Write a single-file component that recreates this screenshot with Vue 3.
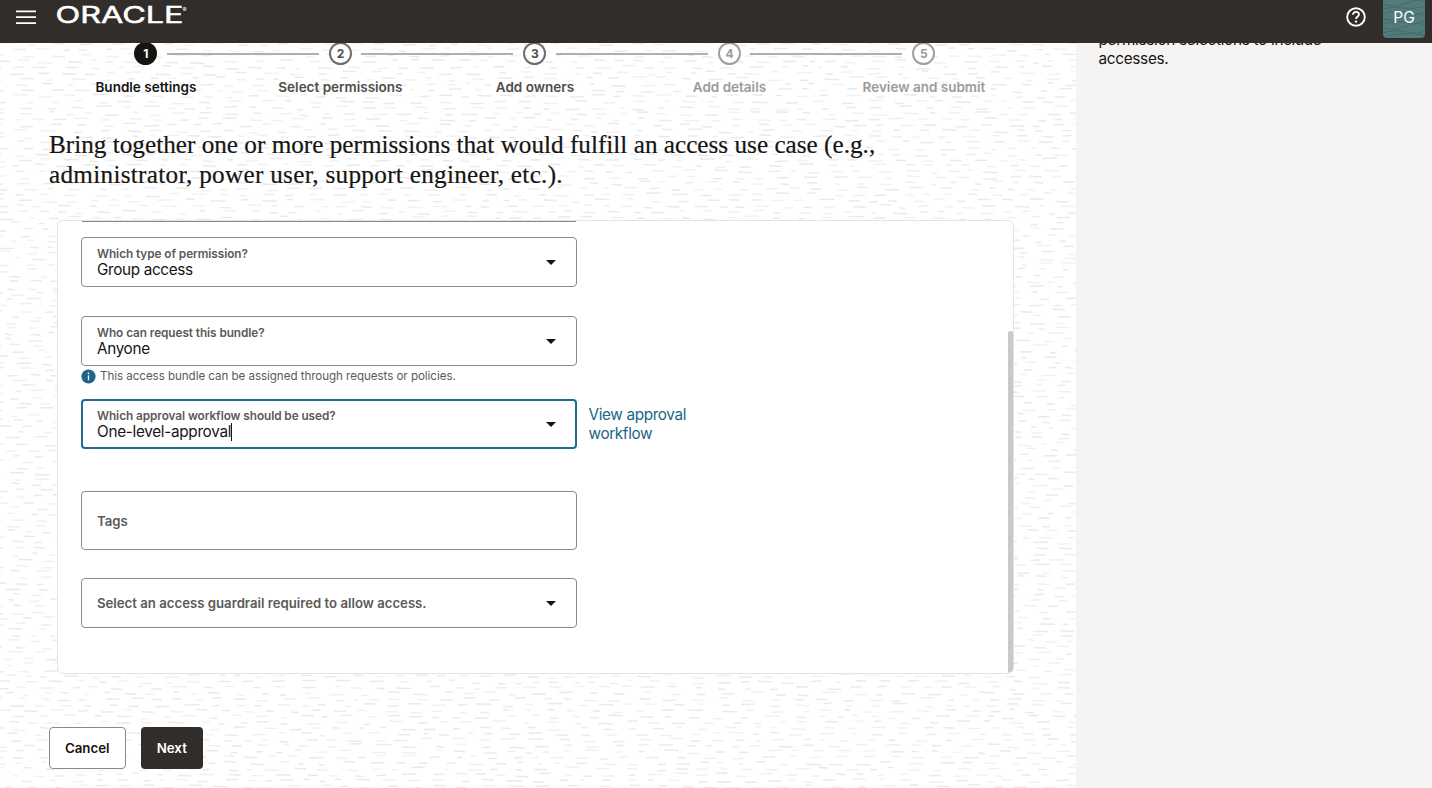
<script setup>
const steps = [
  { n: 1, label: 'Bundle settings', state: 'current' },
  { n: 2, label: 'Select permissions', state: 'open' },
  { n: 3, label: 'Add owners', state: 'open' },
  { n: 4, label: 'Add details', state: 'locked' },
  { n: 5, label: 'Review and submit', state: 'locked' },
]

// Deterministic woven texture made of short, slightly tilted dashes
function texture(width, height, rowGap, colGap, min, max, tilt) {
  let seed = 7
  const rnd = () => {
    seed = (seed * 16807) % 2147483647
    return seed / 2147483647
  }
  let light = ''
  let dark = ''
  for (let y = 1; y < height; y += rowGap) {
    let x = -rnd() * colGap
    while (x < width) {
      const len = min + rnd() * (max - min)
      const dy = (rnd() - 0.4) * tilt
      const d = `M${x.toFixed(1)} ${(y + (rnd() - 0.5) * rowGap * 0.6).toFixed(1)}l${len.toFixed(1)} ${dy.toFixed(1)}`
      if (rnd() > 0.5) light += d
      else dark += d
      x += len + colGap * (0.6 + rnd() * 0.8)
    }
  }
  return { light, dark }
}
const weave = texture(1076, 745, 5.8, 15, 4, 14, 1)
</script>

<template>
  <div class="page">
    <header class="topbar">
      <svg class="menu" width="20" height="16" viewBox="0 0 20 16">
        <path d="M0 2.4H20M0 8.2H20M0 14.2H20" stroke="#fff" stroke-width="1.8" />
      </svg>
      <svg class="logo" width="134" height="28" viewBox="0 0 134 28">
        <text class="word" x="-0.5" y="23" textLength="128" lengthAdjust="spacingAndGlyphs">ORACLE</text>
        <text class="reg" x="126.5" y="11.5">®</text>
      </svg>
      <svg class="help" width="20" height="20" viewBox="0 0 20 20" fill="none" stroke="#fff">
        <circle cx="10" cy="10" r="8.8" stroke-width="1.9" />
        <path d="M7 7.8C7 6 8.3 4.9 10 4.9S13 6 13 7.6C13 9.4 10 9.7 10 12.1" stroke-width="1.8" />
        <circle cx="10" cy="14.6" r="1.2" fill="#fff" stroke="none" />
      </svg>
      <div class="avatar">
        <svg class="grain" width="42" height="37" viewBox="0 0 42 37" fill="none" stroke="#456c6b" stroke-width="1">
          <path d="M0 4Q12 8 24 3T42 2M0 9Q10 6 20 8T42 6M0 14Q14 9 25 13T42 11M0 19Q10 22 22 17T42 16M0 24Q15 20 24 23T42 20M0 28Q10 31 24 26T42 26M0 33Q12 29 24 32T42 30M4 36Q20 32 42 35" />
        </svg>
        <span>PG</span>
      </div>
    </header>
    <div class="body">
      <main class="main">
        <svg class="weave" width="1076" height="745" fill="none" stroke-width="1.5" stroke-linecap="round">
          <path :d="weave.light" stroke="#f1f1f1" />
          <path :d="weave.dark" stroke="#eaeaea" />
        </svg>
        <div class="content">
          <ol class="train">
            <li v-for="s in steps" :key="s.n" :class="['step', s.state]">
              <span class="dot">{{ s.n }}</span>
              <span class="name">{{ s.label }}</span>
            </li>
          </ol>
          <h1><span class="l1">Bring together one or more permissions that would fulfill an access use case (e.g.,</span><br /><span class="l2">administrator, power user, support engineer, etc.).</span></h1>
          <section class="card">
            <div class="cut"></div>
            <div class="field type">
              <div class="text"><label>Which type of permission?</label><span class="value">Group access</span></div>
              <i class="caret"></i>
            </div>
            <div class="field who">
              <div class="text"><label>Who can request this bundle?</label><span class="value">Anyone</span></div>
              <i class="caret"></i>
            </div>
            <div class="hint">
              <svg width="15" height="15" viewBox="0 0 15 15">
                <circle cx="7.5" cy="7.5" r="7.1" fill="#226488" />
                <path d="M7.5 6.4V11.2" stroke="#fff" stroke-width="1.3" />
                <circle cx="7.5" cy="4.3" r=".85" fill="#fff" />
              </svg>
              <span>This access bundle can be assigned through requests or policies.</span>
            </div>
            <div class="row">
              <div class="field focus">
                <div class="text"><label>Which approval workflow should be used?</label><span class="value typed">One-level-approval</span></div>
                <i class="caret"></i>
              </div>
              <a class="link">View approval<br />workflow</a>
            </div>
            <div class="field tags"><span class="ph">Tags</span></div>
            <div class="field guard"><span class="ph">Select an access guardrail required to allow access.</span><i class="caret"></i></div>
            <div class="thumb"></div>
          </section>
          <div class="actions">
            <button class="cancel">Cancel</button>
            <button class="next">Next</button>
          </div>
        </div>
      </main>
      <aside class="side"><p>permission selections to include<br />accesses.</p></aside>
    </div>
  </div>
</template>

<style>
body { margin: 0; overflow: hidden; }
</style>

<style scoped>
* { box-sizing: border-box; }
.page { width: 1432px; height: 788px; overflow: hidden; display: flex; flex-direction: column; font-family: Inter, "Liberation Sans", sans-serif; color: #161513; background: #fff; }
.topbar { height: 43px; flex: none; background: #312d2a; display: flex; align-items: flex-start; padding: 0 7px 0 16px; position: relative; z-index: 2; }
.menu { margin-top: 9px; }
.logo { margin-left: 20px; }
.word { font-size: 22.3px; font-weight: 400; fill: #fff; stroke: #fff; stroke-width: 0.5px; }
.reg { font-size: 6px; fill: #fff; }
.help { margin: 7px 0 0 auto; }
.avatar { position: relative; margin-left: 17px; width: 42px; height: 38px; border-radius: 0 0 4px 4px; background: #537b79; overflow: hidden; color: #fff; font-size: 15.5px; line-height: 36px; text-align: center; }
.grain { position: absolute; inset: 0; }
.avatar span { position: relative; }
.body { display: flex; flex: 1; min-height: 0; }
.main { width: 1076px; position: relative; flex: none; }
.weave { position: absolute; left: 0; top: 0; }
.content { position: relative; display: flex; flex-direction: column; }
.train { list-style: none; display: flex; width: 973px; margin: -1px 0 0 48.7px; padding: 0; }
.step { width: 194.5px; display: flex; flex-direction: column; align-items: center; position: relative; color: #4f4d4a; }
.dot { width: 23px; height: 23px; border: 2px solid #706e6b; border-radius: 50%; background: #fff; font-size: 12px; font-weight: 700; display: flex; align-items: center; justify-content: center; line-height: 1; }
.name { margin-top: 12px; font-size: 13.5px; font-weight: 600; line-height: 20px; white-space: nowrap; }
.step:not(:last-child)::after { content: ""; position: absolute; left: 118px; top: 11px; width: 152px; height: 2px; background: #b0afae; }
.current { color: #161513; }
.current .dot { background: #161513; border-color: #161513; color: #fff; }
.locked { color: #9c9b99; }
.locked .dot { border-color: #a0a0a0; }
h1 { margin: 33px 0 0 49px; font-family: "Liberation Serif", serif; font-size: 25.2px; font-weight: 400; line-height: 30px; white-space: nowrap; color: #161513; -webkit-text-stroke: 0.2px #161513; }
.l1 { letter-spacing: 0.01px; }
.l2 { letter-spacing: 0.29px; }
.card { position: relative; width: 957px; height: 454px; margin: 30px 0 0 57px; background: #fff; border: 1px solid #e5e4e2; border-radius: 6px; padding-left: 22.5px; overflow: hidden; }
.cut { width: 494px; height: 1px; background: #8b8988; margin-left: 1px; }
.field { width: 496px; height: 50px; border: 1px solid #8d8b89; border-radius: 4px; background: #fff; display: flex; align-items: center; padding: 0 20px 0 15.5px; justify-content: space-between; }
.type { margin-top: 15px; }
.who { margin-top: 29px; }
.text { display: flex; flex-direction: column; align-items: flex-start; padding-top: 1px; }
label { font-size: 11.8px; font-weight: 600; line-height: 16px; letter-spacing: -0.07px; color: #5c5a57; white-space: nowrap; }
.value { margin: -1px 0 1px; font-size: 15.3px; line-height: 18px; letter-spacing: -0.35px; color: #161513; }
.typed { border-right: 1px solid #161513; letter-spacing: -0.3px; }
.caret { width: 0; height: 0; border: 5px solid transparent; border-top-color: #161513; border-bottom: 0; }
.hint { display: flex; align-items: center; height: 20px; font-size: 11.6px; letter-spacing: -0.05px; color: #5c5a57; }
.hint span { margin: 0 0 0 4.5px; }
.row { display: flex; align-items: center; margin-top: 13px; }
.focus { border: 2px solid #1f6c96; padding: 0 19px 0 14.5px; }
.link { margin-left: 12px; font-size: 15.3px; line-height: 19px; letter-spacing: -0.36px; color: #226488; }
.tags { height: 59px; margin-top: 42px; }
.guard { margin-top: 28px; }
.ph { font-size: 13.2px; font-weight: 600; color: #5c5a57; }
.thumb { position: absolute; right: 0; top: 110px; width: 5px; height: 342px; background: #c9c9c9; border-radius: 2px; }
.actions { display: flex; gap: 15px; margin: 52.5px 0 0 49px; }
button { height: 42.5px; border-radius: 4px; font: 600 13.3px Inter, sans-serif; padding: 0; }
.cancel { width: 76.5px; background: #fff; border: 1px solid #8b8988; color: #161513; }
.next { width: 62.5px; background: #312d2a; border: 0; color: #fff; }
.side { flex: 1; background: #f5f4f2; }
.side p { margin: -13.5px 0 0 22.5px; font-size: 15.3px; line-height: 19px; letter-spacing: -0.29px; }
</style>
